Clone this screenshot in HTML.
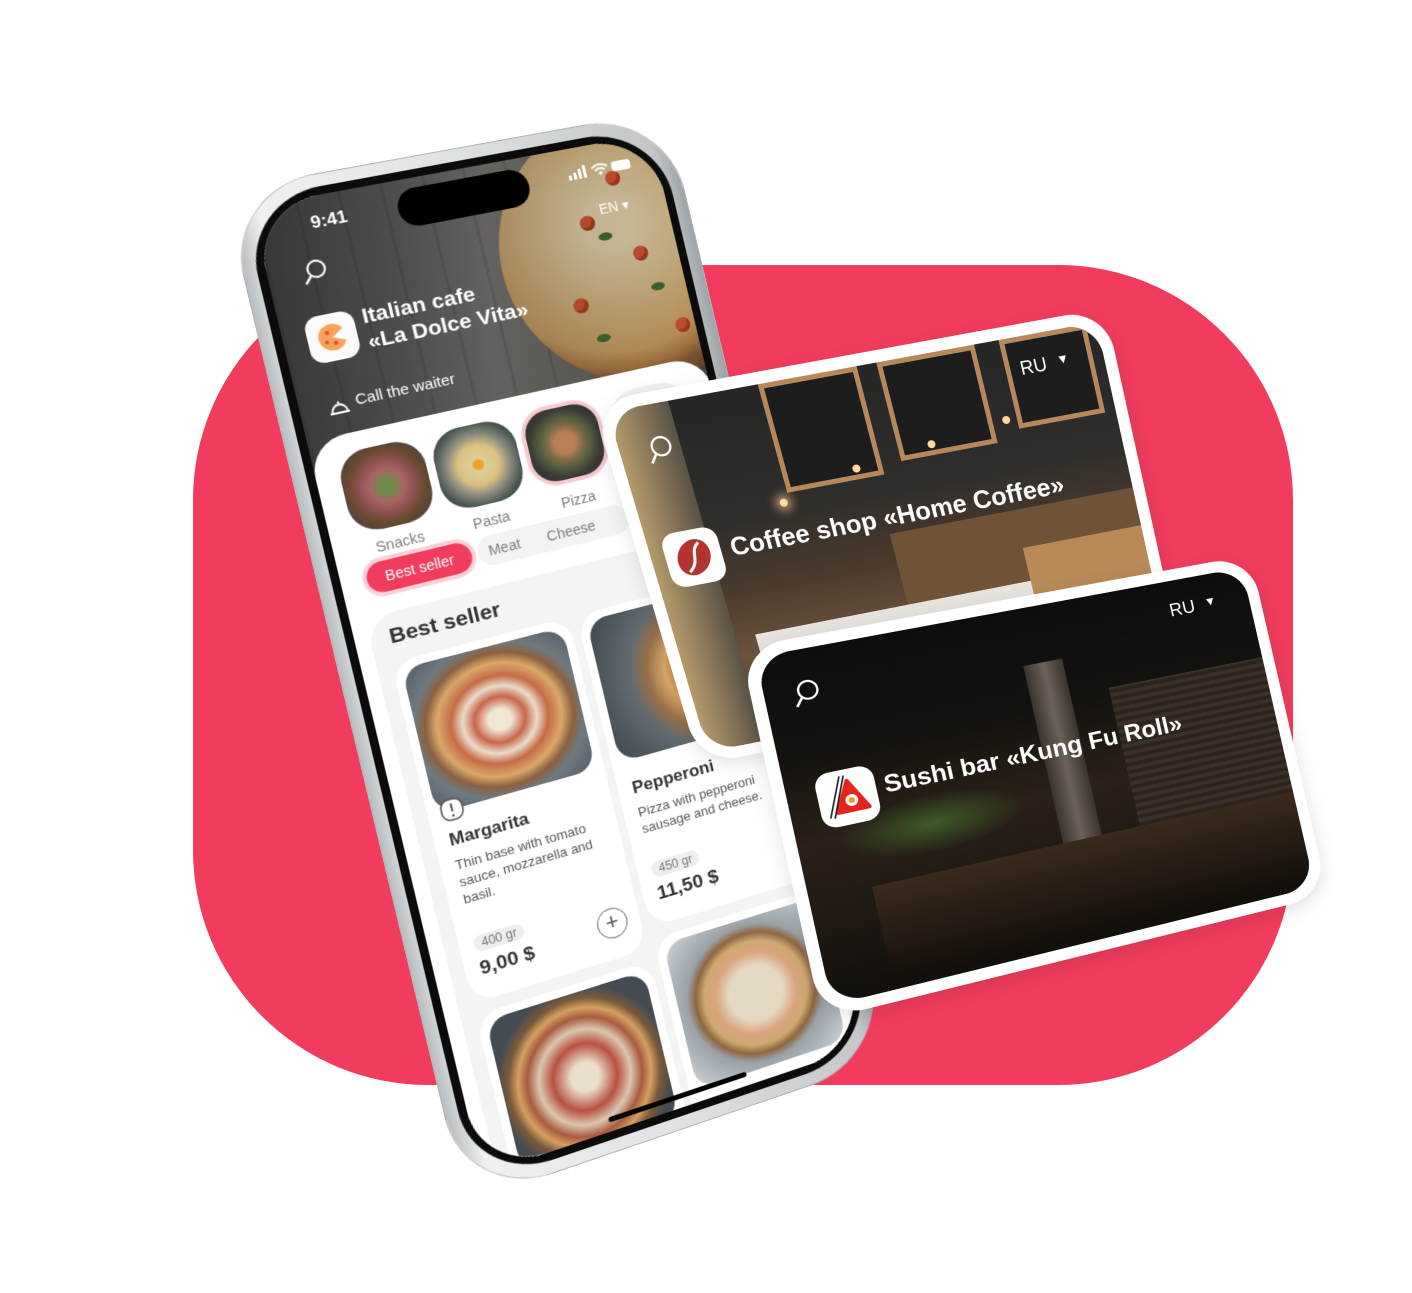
<!DOCTYPE html>
<html><head><meta charset="utf-8">
<style>
*{margin:0;padding:0;box-sizing:border-box}
body{width:1412px;height:1293px;background:#fff;position:relative;overflow:hidden;font-family:"Liberation Sans",sans-serif}
.blob{position:absolute;left:193px;top:265px;width:1100px;height:820px;background:#F23C5D;border-radius:235px}
.q{position:absolute;left:0;top:0;transform-origin:0 0}
#phone{width:430px;height:1000px;transform:matrix(1.0256,-0.186,0.242,1.011,224,191)}
#coffee{width:520px;height:380px;transform:matrix(0.9865,-0.181,0.284,0.955,592,402)}
#sushi{width:520px;height:380px;transform:matrix(0.981,-0.179,0.216,0.979,740,648)}
.frame{position:absolute;inset:0;border-radius:84px;background:linear-gradient(90deg,#b9bdbf,#eef0f1 6%,#dfe2e3 50%,#c3c7c9 95%,#9ea3a6);box-shadow:0 0 0 1px #b0b4b6}
.bez{position:absolute;inset:12px;border-radius:74px;background:#0b0b0b}
.screen{position:absolute;left:20px;top:20px;width:390px;height:960px;border-radius:64px;overflow:hidden;background:#fff}
.abs{position:absolute}
.hdr{left:0;top:0;width:392px;height:290px;background:linear-gradient(100deg,#434446 0%,#5f6062 30%,#7a7874 50%,#6c6760 70%,#4f4a45 100%)}
.piz{border-radius:50%;background:radial-gradient(circle at 40% 40%,#e9d6ad 0 10%,#dcc08a 30%,#cfa062 55%,#b27a42 62%,#8a5d36 66%,#6b4a30 72%,#5a3f2a 74%,transparent 75%)}
.tom{position:absolute;width:15px;height:15px;border-radius:50%;background:#d9532e;box-shadow:inset -3px -3px 0 #b23b1c}
.leaf{position:absolute;width:14px;height:8px;border-radius:50%;background:#3f6d2d}
.wt{color:#fff}
.tile{position:absolute;width:80px;height:80px;border-radius:28px;overflow:hidden}
.lab{position:absolute;font-size:14px;color:#7d7d7d;width:90px;text-align:center}
.chip{position:absolute;height:30px;border-radius:15px;font-size:14px;line-height:30px;text-align:center}
.card{position:absolute;background:#fff;border-radius:24px}
.img{position:absolute;border-radius:20px;overflow:hidden}
.cin{position:absolute;inset:12px;border-radius:32px;overflow:hidden}
.cw{position:absolute;inset:0;border-radius:42px;background:#fff;box-shadow:0 6px 20px rgba(0,0,0,.12)}
</style></head><body>
<div class="blob"></div>

<div id="phone" class="q">
 <div class="frame"></div>
 <div class="bez"></div>
 <div class="screen">
  <div class="abs hdr"></div>
  <div class="abs" style="left:0;top:0;width:392px;height:290px;background:repeating-linear-gradient(90deg,rgba(0,0,0,.1) 0 3px,transparent 3px 40px)"></div>
  <div class="abs piz" style="left:215px;top:-30px;width:280px;height:280px"></div>
  <div class="tom" style="left:300px;top:70px"></div><div class="tom" style="left:345px;top:110px"></div><div class="tom" style="left:275px;top:150px"></div><div class="tom" style="left:335px;top:30px"></div><div class="tom" style="left:370px;top:190px"></div>
  <div class="leaf" style="left:315px;top:90px"></div><div class="leaf" style="left:290px;top:190px"></div><div class="leaf" style="left:355px;top:150px"></div>
  <div class="abs" style="left:0;top:0;width:392px;height:290px;background:linear-gradient(90deg,rgba(30,30,30,.35),rgba(30,30,30,.15))"></div>
  <div class="abs wt" style="left:50px;top:16px;font-size:17px;font-weight:bold">9:41</div>
  <div class="abs" style="left:132px;top:10px;width:128px;height:38px;border-radius:19px;background:#000"></div>
  <div class="abs" style="left:300px;top:18px;width:60px;height:14px">
   <svg width="64" height="16"><rect x="0" y="9" width="3" height="5" fill="#fff"/><rect x="5" y="7" width="3" height="7" fill="#fff"/><rect x="10" y="4" width="3" height="10" fill="#fff"/><rect x="15" y="1" width="3" height="13" fill="#fff"/><path d="M24 6 q8 -6 16 0 M27 9 q5 -4 10 0" stroke="#fff" stroke-width="2" fill="none"/><circle cx="32" cy="12" r="1.8" fill="#fff"/><rect x="44" y="3" width="19" height="10" rx="3" fill="#fff"/></svg>
  </div>
  <div class="abs wt" style="left:322px;top:58px;font-size:14px">EN &#9662;</div>
  <svg class="abs" style="left:30px;top:60px" width="26" height="26"><circle cx="15" cy="10" r="8" stroke="#fff" stroke-width="2" fill="none"/><path d="M9 16 L3 23" stroke="#fff" stroke-width="2.2"/></svg>
  <div class="abs" style="left:22px;top:115px;width:46px;height:46px;border-radius:13px;background:#fbfbfb">
   <svg width="46" height="46"><path d="M23 23 L34 16 A13 13 0 1 0 35 28 Z" fill="#f7a35c"/><circle cx="19" cy="18" r="2" fill="#e2492c"/><circle cx="25" cy="29" r="2" fill="#e2492c"/><circle cx="17" cy="27" r="1.8" fill="#e2492c"/></svg>
  </div>
  <div class="abs wt" style="left:76px;top:112px;font-size:21px;font-weight:bold;line-height:25px">Italian cafe<br>&laquo;La Dolce Vita&raquo;</div>
  <svg class="abs" style="left:24px;top:194px" width="24" height="20"><path d="M3 17 H21 M5 16 A7 7 0 0 1 19 16 M12 8 V6" stroke="#fff" stroke-width="1.8" fill="none"/></svg>
  <div class="abs wt" style="left:52px;top:194px;font-size:15px">Call the waiter</div>

  <div class="abs" style="left:0;top:232px;width:392px;height:740px;background:#fff;border-radius:36px 36px 0 0"></div>
  <div class="tile" style="left:22px;top:250px;background:radial-gradient(circle at 50% 50%,#6f8a48 0 12%,#a86565 28%,#8e5253 45%,#6b4a30 62%,#4a4240 85%)"></div>
  <div class="tile" style="left:110px;top:250px;background:radial-gradient(circle at 50% 50%,#f0a020 0 7%,#e0cf98 12%,#d9c080 35%,#8f8f80 52%,#4e5a55 72%,#333 90%)"></div>
  <div class="tile" style="left:196px;top:248px;border:4px solid #f8c9d0;background:radial-gradient(circle at 50% 50%,#b97f56 0 20%,#7f6a46 35%,#56603e 48%,#3b3a35 68%,#2e2e2e 90%)"></div>
  <div class="tile" style="left:286px;top:250px;background:radial-gradient(circle at 50% 50%,#e8d8b0 0 20%,#3f86b8 40%,#f0f0f0 60%)"></div>
  <div class="lab" style="left:17px;top:338px">Snacks</div>
  <div class="lab" style="left:105px;top:338px">Pasta</div>
  <div class="lab" style="left:191px;top:338px">Pizza</div>
  <div class="chip" style="left:130px;top:360px;width:150px;background:#f3f3f3"></div>
  <div class="chip" style="left:24px;top:360px;width:100px;background:#F23C5D;color:#fff;box-shadow:0 0 0 4px #fbd0d7">Best seller</div>
  <div class="chip" style="left:128px;top:360px;width:56px;color:#7d7d7d">Meat</div>
  <div class="chip" style="left:186px;top:360px;width:72px;color:#7d7d7d">Cheese</div>

  <div class="abs" style="left:14px;top:410px;width:392px;height:600px;background:#f4f4f4;border-radius:30px"></div>
  <div class="abs" style="left:32px;top:422px;font-size:21px;font-weight:bold;color:#333">Best seller</div>
  <div class="card" style="left:28px;top:458px;width:172px;height:340px">
   <div class="img" style="left:8px;top:8px;width:156px;height:145px;background:radial-gradient(ellipse at 50% 50%,#efe6d6 0 10%,#c9664a 22%,#e8dccb 32%,#c76a45 42%,#d9a868 54%,#8a6040 64%,#6f7a82 74%,#4f5a62 100%)"></div>
   <svg class="abs" style="left:10px;top:140px" width="26" height="26"><rect x="3" y="3" width="20" height="20" rx="8" fill="#fff" stroke="#555" stroke-width="1.5"/><path d="M13 7 V15" stroke="#555" stroke-width="1.8"/><circle cx="13" cy="19" r="1.2" fill="#555"/></svg>
   <div class="abs" style="left:14px;top:172px;font-size:17px;font-weight:bold;color:#333">Margarita</div>
   <div class="abs" style="left:14px;top:198px;width:150px;font-size:13px;line-height:17px;color:#555">Thin base with tomato sauce, mozzarella and basil.</div>
   <div class="abs" style="left:14px;top:278px;padding:1px 7px;border-radius:10px;background:#eee;font-size:12px;color:#777">400 gr</div>
   <div class="abs" style="left:14px;top:300px;font-size:19px;font-weight:bold;color:#333">9,00 $</div>
   <div class="abs" style="left:130px;top:290px;width:30px;height:30px;border-radius:50%;border:1.5px solid #666;color:#555;font-size:22px;line-height:25px;text-align:center">+</div>
  </div>
  <div class="card" style="left:208px;top:458px;width:172px;height:320px">
   <div class="img" style="left:8px;top:8px;width:156px;height:145px;background:radial-gradient(circle at 70% 50%,#c9683c 0 20%,#d9a868 35%,#9a7048 48%,#606a70 62%,#3f474c)"></div>
   <div class="abs" style="left:14px;top:172px;font-size:17px;font-weight:bold;color:#333">Pepperoni</div>
   <div class="abs" style="left:14px;top:198px;width:155px;font-size:13px;line-height:17px;color:#555">Pizza with pepperoni sausage and cheese.</div>
   <div class="abs" style="left:14px;top:258px;padding:1px 7px;border-radius:10px;background:#eee;font-size:12px;color:#777">450 gr</div>
   <div class="abs" style="left:14px;top:280px;font-size:19px;font-weight:bold;color:#333">11,50 $</div>
  </div>
  <div class="card" style="left:28px;top:810px;width:172px;height:200px"><div class="img" style="left:8px;top:8px;width:156px;height:150px;background:radial-gradient(ellipse at 50% 55%,#e9dfcc 0 12%,#b95040 28%,#d9c8ae 40%,#a85a40 50%,#d4a060 58%,#7a5a3a 66%,#444b52 76%)"></div></div>
  <div class="card" style="left:208px;top:790px;width:172px;height:220px"><div class="img" style="left:8px;top:8px;width:156px;height:150px;background:radial-gradient(circle at 50% 50%,#e4dac4 0 25%,#d9a47e 38%,#cfa872 48%,#8e6640 56%,#9aa2a8 64%,#cfd4d8)"></div></div>
  <div class="abs" style="left:126px;top:946px;width:140px;height:5px;border-radius:3px;background:#000"></div>
 </div>
</div>

<div id="coffee" class="q">
 <div class="cw"></div>
 <div class="cin" style="background:linear-gradient(180deg,#262626 0%,#2f2e2c 35%,#4a3a2c 55%,#6b543d 75%,#3a3632 100%)">
  <div class="abs" style="left:0;top:0;width:60px;height:360px;background:linear-gradient(90deg,#b49a6a,#5a5246)"></div>
  <div class="abs" style="left:150px;top:0;width:100px;height:110px;background:#1d1d1d;border:5px solid #b7895a"></div>
  <div class="abs" style="left:270px;top:0;width:100px;height:100px;background:#1d1d1d;border:5px solid #b7895a"></div>
  <div class="abs" style="left:395px;top:0;width:90px;height:90px;background:#1d1d1d;border:5px solid #b7895a"></div>
  <div class="abs" style="left:240px;top:170px;width:260px;height:90px;background:#6e5337"></div>
  <div class="abs" style="left:80px;top:245px;width:300px;height:30px;background:#e6e3df"></div>
  <div class="abs" style="left:370px;top:210px;width:140px;height:80px;background:#b98a58"></div>
  <div class="abs" style="left:140px;top:115px;width:8px;height:8px;border-radius:50%;background:#ffd9a0;box-shadow:0 0 10px 4px rgba(255,210,140,.7),80px -20px 0 0 #ffd9a0,160px -30px 0 0 #ffd9a0,240px -40px 0 0 #ffd9a0"></div>
 </div>
 <svg class="abs" style="left:36px;top:42px" width="30" height="30"><circle cx="17" cy="12" r="9" stroke="#fff" stroke-width="2.2" fill="none"/><path d="M10 19 L4 27" stroke="#fff" stroke-width="2.4"/></svg>
 <div class="abs" style="left:26px;top:140px;width:56px;height:56px;border-radius:14px;background:#fff">
  <svg width="56" height="56"><ellipse cx="28" cy="28" rx="16" ry="19" fill="#b3332e" transform="rotate(35 28 28)"/><path d="M36 14 C24 22 34 32 20 42" stroke="#fff" stroke-width="3" fill="none"/></svg>
 </div>
 <div class="abs wt" style="left:92px;top:150px;font-size:26px;font-weight:bold;white-space:nowrap">Coffee shop &laquo;Home Coffee&raquo;</div>
 <div class="abs wt" style="left:422px;top:34px;font-size:19px">RU</div>
 <div class="abs wt" style="left:460px;top:34px;font-size:13px">&#9660;</div>
</div>

<div id="sushi" class="q">
 <div class="cw"></div>
 <div class="cin" style="background:linear-gradient(180deg,#0d0d10 0%,#15120f 30%,#2a2118 55%,#1e1813 80%,#120f0c 100%)">
  <div class="abs" style="left:250px;top:60px;width:40px;height:240px;background:linear-gradient(90deg,#3a342e,#6b6258,#3a342e)"></div>
  <div class="abs" style="left:40px;top:170px;width:180px;height:60px;background:radial-gradient(ellipse,#3d5a2a,transparent 70%)"></div>
  <div class="abs" style="left:330px;top:100px;width:180px;height:150px;background:repeating-linear-gradient(0deg,#2a241d 0 4px,#3b3126 4px 8px)"></div>
  <div class="abs" style="left:60px;top:250px;width:440px;height:100px;background:linear-gradient(180deg,#3a2a1c,#120e0b)"></div>
 </div>
 <svg class="abs" style="left:36px;top:42px" width="30" height="30"><circle cx="17" cy="12" r="9" stroke="#fff" stroke-width="2.2" fill="none"/><path d="M10 19 L4 27" stroke="#fff" stroke-width="2.4"/></svg>
 <div class="abs" style="left:40px;top:140px;width:56px;height:56px;border-radius:14px;background:#fff">
  <svg width="56" height="56"><path d="M30 12 L46 42 H16 Z" fill="#e52421" stroke="#e52421" stroke-width="4" stroke-linejoin="round"/><circle cx="31" cy="32" r="6" fill="#fff"/><circle cx="31" cy="32" r="3" fill="#f29a1f"/><path d="M24 6 L8 46 M28 6 L12 47" stroke="#222" stroke-width="1.6"/></svg>
 </div>
 <div class="abs wt" style="left:104px;top:150px;font-size:25px;font-weight:bold;white-space:nowrap">Sushi bar &laquo;Kung Fu Roll&raquo;</div>
 <div class="abs wt" style="left:422px;top:34px;font-size:19px">RU</div>
 <div class="abs wt" style="left:460px;top:34px;font-size:13px">&#9660;</div>
</div>

<script>
function H(w,h,q){var x0=q[0],y0=q[1],x1=q[2],y1=q[3],x2=q[4],y2=q[5],x3=q[6],y3=q[7];
var dx1=x1-x2,dx2=x3-x2,dy1=y1-y2,dy2=y3-y2,sx=x0-x1+x2-x3,sy=y0-y1+y2-y3;
var det=dx1*dy2-dx2*dy1,g=(sx*dy2-dx2*sy)/det,k=(dx1*sy-sx*dy1)/det;
var a=x1-x0+g*x1,b=x3-x0+k*x3,c=x0,d=y1-y0+g*y1,e=y3-y0+k*y3,f=y0;
a/=w;d/=w;g/=w;b/=h;e/=h;k/=h;
return "matrix3d("+[a,d,0,g,b,e,0,k,0,0,1,0,c,f,0,1].join(",")+")";}
try{
document.getElementById("phone").style.transform=H(430,1000,[224,191,665,111,889,1058,466,1202]);
document.getElementById("coffee").style.transform=H(520,380,[592,402,1105,308,1184,668,700,765]);
document.getElementById("sushi").style.transform=H(520,380,[740,648,1250,555,1328,895,822,1020]);
}catch(e){}
</script>
</body></html>
